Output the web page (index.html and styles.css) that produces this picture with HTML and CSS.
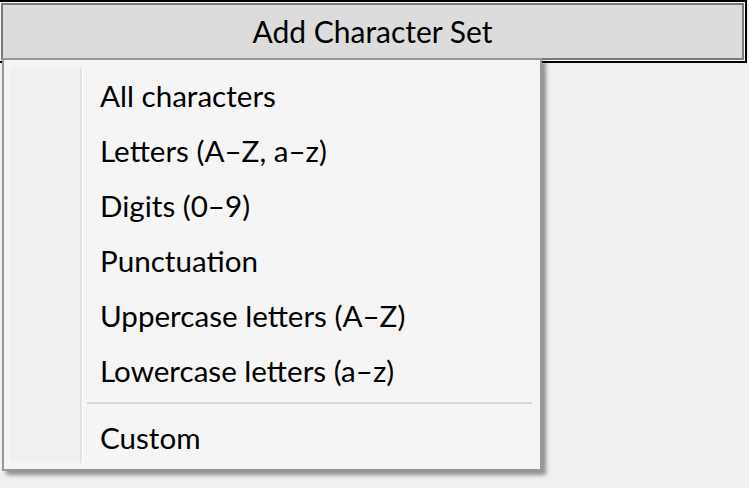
FILE: index.html
```html
<!DOCTYPE html>
<html>
<head>
<meta charset="utf-8">
<link rel="stylesheet" href="styles.css">
</head>
<body>
<div class="btn-outer">
  <div class="btn-inner">Add Character Set</div>
</div>
<div class="menu">
  <div class="gutter"></div>
  <div class="vline"></div>
  <div class="list">
    <div class="item">All characters</div>
    <div class="item">Letters (A–Z, a–z)</div>
    <div class="item">Digits (0–9)</div>
    <div class="item">Punctuation</div>
    <div class="item">Uppercase letters (A–Z)</div>
    <div class="item">Lowercase letters (a–z)</div>
    <div class="sep"></div>
    <div class="item">Custom</div>
  </div>
</div>
</body>
</html>
```
FILE: styles.css
```css
html, body {
  margin: 0;
  padding: 0;
  background: #f0f0f0;
  width: 749px;
  height: 488px;
  overflow: hidden;
  font-family: Lato, "Noto Sans", sans-serif;
  color: #000;
}
.btn-outer {
  margin-left: -2px;
  width: 749px;
  height: 63px;
  box-sizing: border-box;
  border: 2px solid #000;
  padding: 1px;
  background: #f8f8f8;
}
.btn-inner {
  box-sizing: border-box;
  height: 100%;
  border: 2px solid #7a7a7a;
  background: #dcdcdc;
  display: flex;
  align-items: center;
  justify-content: center;
  font-size: 30px;
  padding-bottom: 1px;
}
.menu {
  position: absolute;
  left: 2px;
  top: 58px;
  width: 540px;
  height: 413px;
  box-sizing: border-box;
  border: 2px solid #979797;
  background: #f5f5f5;
  box-shadow: 4px 4px 4px rgba(0, 0, 0, 0.4);
  display: flex;
}
.gutter {
  width: 70px;
  margin: 7px 0 6px 6px;
  background: #f0f0f0;
  border-radius: 4px;
}
.vline {
  width: 2px;
  margin: 7px 0 6px 0;
  background: #e2e2e2;
  border-right: 1px solid #ffffff;
}
.list {
  flex: 1;
  padding-top: 8px;
}
.item {
  height: 55px;
  display: flex;
  align-items: center;
  padding-left: 17px;
  padding-bottom: 1px;
  box-sizing: border-box;
  font-size: 29.6px;
}
.sep {
  height: 2px;
  background: #d7d7d7;
  margin: 4px 8px 6px 4px;
}
```
